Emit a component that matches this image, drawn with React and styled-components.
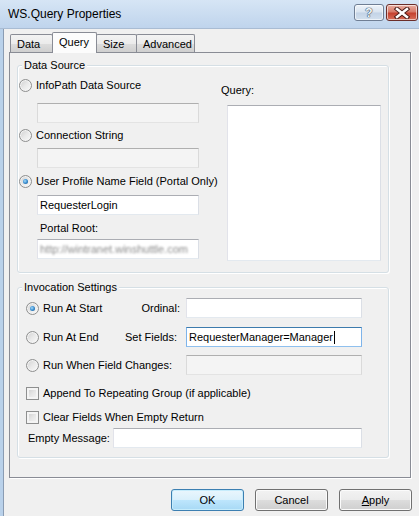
import React from "react";
import styled, { createGlobalStyle, css } from "styled-components";

const GlobalStyle = createGlobalStyle`
  * { box-sizing: border-box; }
  html, body {
    margin: 0;
    padding: 0;
    background: #f0f0f0;
    overflow: hidden;
  }
  body {
    font-family: "Liberation Sans", Arial, sans-serif;
    font-size: 11px;
    color: #000;
  }
`;

const Window = styled.div`
  width: 419px;
  height: 516px;
  display: flex;
  flex-direction: column;
  overflow: hidden;
  background: #f0f0f0;
`;

const TitleBar = styled.div`
  height: 29px;
  flex: none;
  display: flex;
  align-items: flex-start;
  padding: 0 1px 0 8px;
  background: linear-gradient(#d6e5f5, #bfd4ec);
  border-bottom: 1px solid #a9bcd3;
`;

const Title = styled.div`
  margin-top: 7px;
  font-size: 12px;
  line-height: 14px;
  color: #000;
`;

const CaptionButtons = styled.div`
  margin-left: auto;
  margin-top: 4px;
  display: flex;
  gap: 2px;
`;

const CaptionButton = styled.div`
  height: 17px;
  width: ${(p) => p.$w}px;
  border: 1px solid #6f7e94;
  border-radius: 3px;
  display: flex;
  align-items: center;
  justify-content: center;
  background: linear-gradient(#eef3f9 0%, #d9e4f0 48%, #c3d3e6 52%, #d3e0ee 100%);
  box-shadow: inset 0 0 0 1px rgba(255, 255, 255, 0.6);
  font-weight: bold;
  font-size: 12px;
  color: #f7f9fc;
  text-shadow: 0 0 1px #34465c, 0 0 1px #34465c, 0 0 1px #34465c;
  ${(p) =>
    p.$close &&
    css`
      border-color: #6b2e2a;
      background: linear-gradient(#eab0a4 0%, #d77a69 45%, #c5412f 55%, #d8705b 100%);
    `}
`;

const Client = styled.div`
  flex: 1;
  display: flex;
  flex-direction: column;
  border-left: 3px solid #b9d1ea;
  box-shadow: inset 1px 0 0 #8a9cb3;
  padding: 3px 0 0 6px;
`;

const TabStrip = styled.div`
  height: 20px;
  display: flex;
  align-items: flex-end;
  padding-left: 1px;
`;

const Tab = styled.div`
  position: relative;
  width: ${(p) => p.$w}px;
  height: 18px;
  margin-left: ${(p) => (p.$first ? 0 : -1)}px;
  border: 1px solid #898c95;
  border-bottom: none;
  border-radius: 2px 2px 0 0;
  background: linear-gradient(#f3f3f3 0%, #ebebeb 50%, #dddddd 51%, #cfcfcf 100%);
  display: flex;
  align-items: center;
  padding: 2px 0 0 6px;
  line-height: 13px;
  ${(p) =>
    p.$active &&
    css`
      height: 21px;
      margin-bottom: -1px;
      z-index: 2;
      background: #fcfcfc;
      padding: 0 0 2px 6px;
    `}
`;

const TabPage = styled.div`
  position: relative;
  z-index: 1;
  width: 402px;
  height: 426px;
  border: 1px solid #898c95;
  box-shadow: 1px 1px 0 #fff;
  background: #f0f0f0;
  padding: 12px 0 0 7px;
`;

const GroupBox = styled.div`
  position: relative;
  width: 372px;
  height: ${(p) => p.$h}px;
  margin-top: ${(p) => p.$mt || 0}px;
  border: 1px solid #d5dfe5;
  border-radius: 3px;
  box-shadow: inset 1px 1px 0 #fff, 1px 1px 0 #fff;
  display: flex;
`;

const Legend = styled.span`
  position: absolute;
  top: -7px;
  left: 4px;
  padding: 0 2px;
  line-height: 13px;
  background: #f0f0f0;
`;

const SourceColumn = styled.div`
  display: flex;
  flex-direction: column;
  align-items: flex-start;
  padding: 13px 0 0 1px;
`;

const QueryColumn = styled.div`
  margin-left: auto;
  display: flex;
  flex-direction: column;
  align-items: flex-start;
  padding: 18px 7px 0 0;
`;

const InvocationBody = styled.div`
  flex: 1;
  display: flex;
  flex-direction: column;
  padding: 10px 26px 0 8px;
`;

const Row = styled.div`
  height: 20px;
  display: flex;
  align-items: center;
  margin-top: ${(p) => p.$mt || 0}px;
  padding-left: ${(p) => p.$pl || 0}px;
`;

const Option = styled.label`
  display: flex;
  align-items: center;
  gap: 4px;
  height: 13px;
  line-height: 13px;
  white-space: nowrap;
  margin-top: ${(p) => p.$mt || 0}px;
  ${(p) => p.$grow && "flex: 1;"}
`;

const Radio = styled.span`
  position: relative;
  flex: none;
  width: 13px;
  height: 13px;
  border-radius: 50%;
  border: 1px solid #8e8f8f;
  background: linear-gradient(135deg, #cfcfcf 0%, #e9e9e9 50%, #fafafa 100%);
  box-shadow: inset 0 0 0 1px #f4f4f4;
  ${(p) =>
    p.$checked &&
    css`
      &::after {
        content: "";
        position: absolute;
        left: 3px;
        top: 3px;
        width: 5px;
        height: 5px;
        border-radius: 50%;
        background: radial-gradient(circle at 40% 40%, #a8dcfa 0%, #3a8fd2 50%, #164c7c 100%);
      }
    `}
`;

const Check = styled.span`
  flex: none;
  width: 13px;
  height: 13px;
  border: 1px solid #8e8f8f;
  background: linear-gradient(135deg, #c9c9c9 0%, #e6e6e6 50%, #f6f6f6 100%);
  box-shadow: inset 0 0 0 2px #f4f4f4;
`;

const FieldLabel = styled.span`
  line-height: 13px;
  white-space: nowrap;
  margin: ${(p) => p.$mt || 0}px ${(p) => p.$mr || 0}px 0 ${(p) => p.$ml || 0}px;
`;

const TextBox = styled.div`
  flex: none;
  width: ${(p) => p.$w}px;
  height: ${(p) => p.$h || 20}px;
  margin: ${(p) => p.$mt || 0}px 0 0 ${(p) => p.$ml || 0}px;
  border: 1px solid;
  border-color: #abadb3 #dbdfe6 #e3e9ef #e2e3ea;
  background: #fff;
  padding: 0 2px;
  display: flex;
  align-items: center;
  white-space: nowrap;
  overflow: hidden;
  ${(p) =>
    p.$disabled &&
    css`
      background: #f4f4f4;
      border-color: #afafaf #dadada #e3e3e3 #dadada;
    `}
  ${(p) =>
    p.$focus &&
    css`
      border-color: #3d7bad #7eb4ea #8fc0ee #7eb4ea;
    `}
`;

const Blurred = styled.span`
  color: #8a8a8a;
  filter: blur(1.1px);
`;

const Caret = styled.span`
  display: inline-block;
  width: 1px;
  height: 13px;
  background: #000;
  margin-left: 1px;
`;

const ButtonBar = styled.div`
  width: 403px;
  display: flex;
  justify-content: flex-end;
  gap: 11px;
  margin-top: 11px;
`;

const Button = styled.button`
  width: 73px;
  height: 22px;
  padding: 0;
  border: 1px solid #707070;
  border-radius: 3px;
  background: linear-gradient(#f2f2f2 0%, #ebebeb 49%, #dddddd 50%, #cfcfcf 100%);
  box-shadow: inset 0 0 0 1px #fbfbfb;
  font-family: inherit;
  font-size: 11px;
  color: #000;
  ${(p) =>
    p.$default &&
    css`
      border-color: #3c7fb1;
      background: linear-gradient(#eaf6fd 0%, #d9f0fc 49%, #bee6fd 50%, #a7d9f5 100%);
      box-shadow: inset 0 0 0 1px #c6ecfc;
    `}
`;

function CloseGlyph() {
  return (
    <svg width="18" height="12" viewBox="0 0 18 12">
      <path d="M4 2 L14 10 M14 2 L4 10" stroke="#4a1c17" strokeWidth="4.5" strokeLinecap="square" />
      <path d="M4 2 L14 10 M14 2 L4 10" stroke="#fff" strokeWidth="2.5" strokeLinecap="square" />
    </svg>
  );
}

export default function App() {
  return (
    <>
      <GlobalStyle />
      <Window>
        <TitleBar>
          <Title>WS.Query Properties</Title>
          <CaptionButtons>
            <CaptionButton $w={30}>?</CaptionButton>
            <CaptionButton $w={32} $close>
              <CloseGlyph />
            </CaptionButton>
          </CaptionButtons>
        </TitleBar>

        <Client>
          <TabStrip>
            <Tab $w={43} $first>Data</Tab>
            <Tab $w={45} $active>Query</Tab>
            <Tab $w={41}>Size</Tab>
            <Tab $w={59}>Advanced</Tab>
          </TabStrip>

          <TabPage>
            <GroupBox $h={208}>
              <Legend>Data Source</Legend>
              <SourceColumn>
                <Option>
                  <Radio />
                  InfoPath Data Source
                </Option>
                <TextBox $w={162} $ml={18} $mt={11} $disabled />
                <Option $mt={6}>
                  <Radio />
                  Connection String
                </Option>
                <TextBox $w={162} $ml={18} $mt={6} $disabled />
                <Option $mt={7}>
                  <Radio $checked />
                  User Profile Name Field (Portal Only)
                </Option>
                <TextBox $w={162} $ml={18} $mt={7}>RequesterLogin</TextBox>
                <FieldLabel $ml={21} $mt={7}>Portal Root:</FieldLabel>
                <TextBox $w={162} $ml={18} $mt={4}>
                  <Blurred>http://wintranet.winshuttle.com</Blurred>
                </TextBox>
              </SourceColumn>
              <QueryColumn>
                <FieldLabel>Query:</FieldLabel>
                <TextBox $w={154} $h={156} $ml={6} $mt={8} />
              </QueryColumn>
            </GroupBox>

            <GroupBox $h={171} $mt={14}>
              <Legend>Invocation Settings</Legend>
              <InvocationBody>
                <Row>
                  <Option $grow>
                    <Radio $checked />
                    Run At Start
                  </Option>
                  <FieldLabel $mr={6}>Ordinal:</FieldLabel>
                  <TextBox $w={176} />
                </Row>
                <Row $mt={9}>
                  <Option $grow>
                    <Radio />
                    Run At End
                  </Option>
                  <FieldLabel $mr={9}>Set Fields:</FieldLabel>
                  <TextBox $w={176} $focus>
                    RequesterManager=Manager
                    <Caret />
                  </TextBox>
                </Row>
                <Row $mt={8}>
                  <Option $grow>
                    <Radio />
                    Run When Field Changes:
                  </Option>
                  <TextBox $w={176} $disabled />
                </Row>
                <Option $mt={12}>
                  <Check />
                  Append To Repeating Group (if applicable)
                </Option>
                <Option $mt={11}>
                  <Check />
                  Clear Fields When Empty Return
                </Option>
                <Row $mt={4} $pl={2}>
                  <FieldLabel>Empty Message:</FieldLabel>
                  <TextBox $w={249} style={{ marginLeft: "auto" }} />
                </Row>
              </InvocationBody>
            </GroupBox>
          </TabPage>

          <ButtonBar>
            <Button $default>OK</Button>
            <Button>Cancel</Button>
            <Button>
              <u>A</u>pply
            </Button>
          </ButtonBar>
        </Client>
      </Window>
    </>
  );
}
